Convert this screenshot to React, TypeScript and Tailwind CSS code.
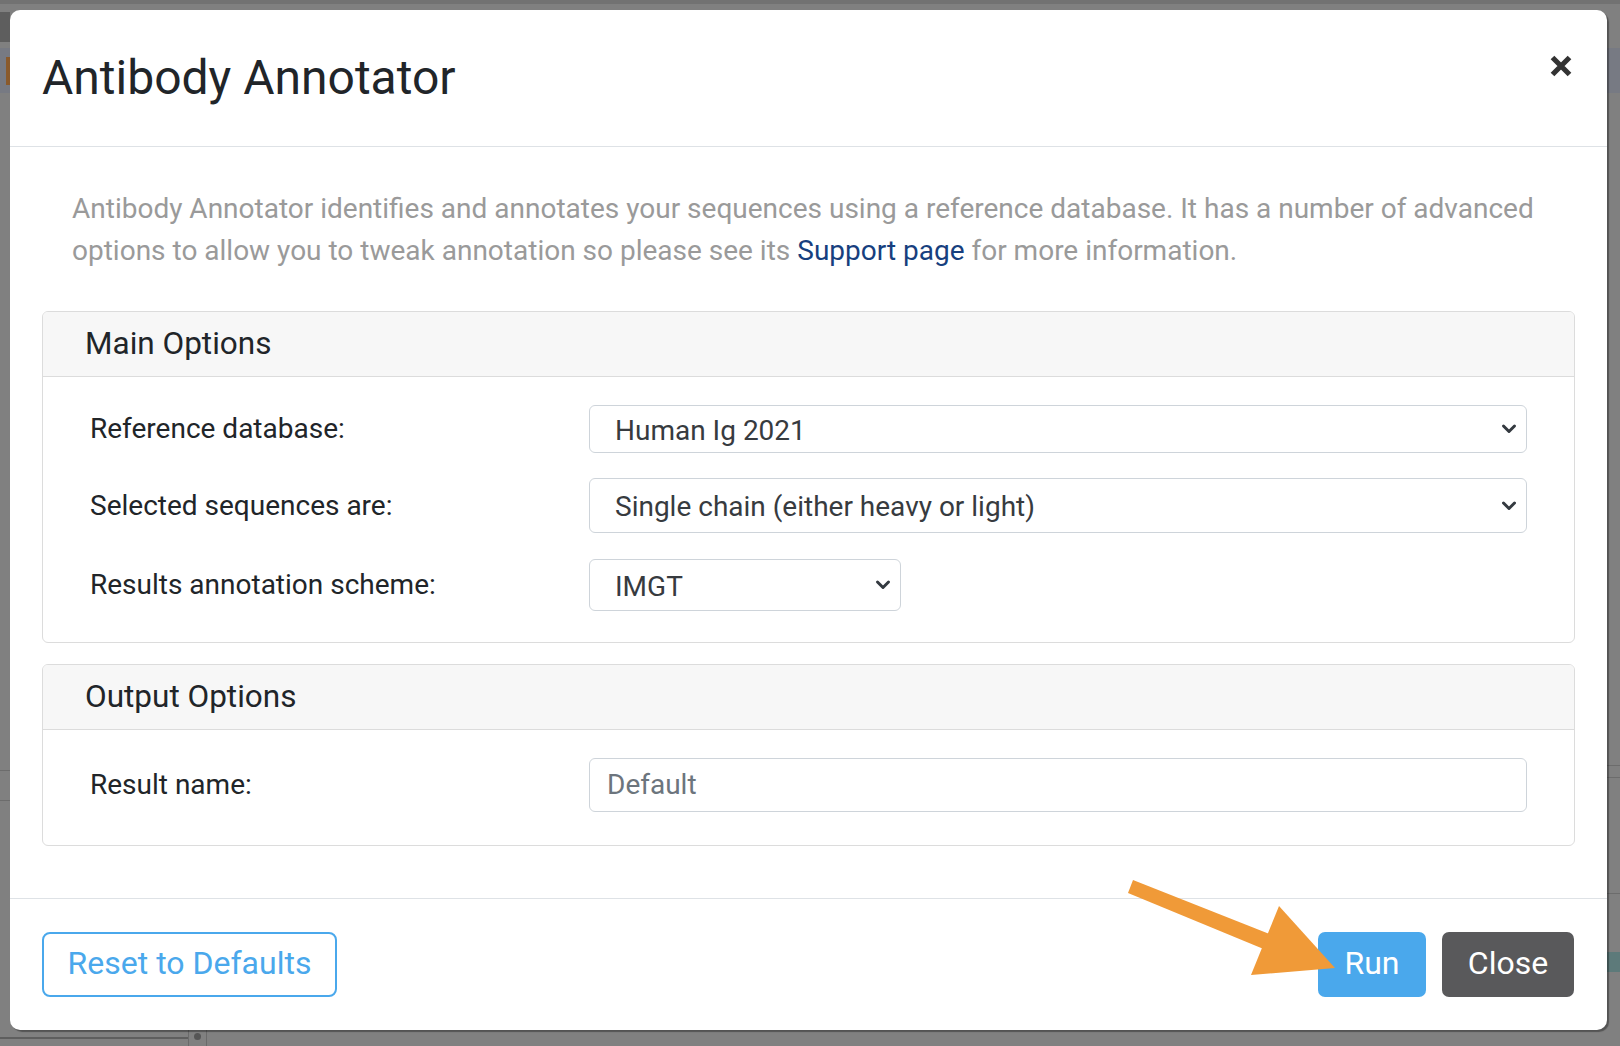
import React from "react";

function Chevron() {
  return (
    <svg width="16" height="12" viewBox="0 0 16 12" className="shrink-0">
      <path d="M2.5 3l5.5 5.5 5.5-5.5" fill="none" stroke="#343a40" strokeWidth="3" strokeLinecap="round" strokeLinejoin="round" />
    </svg>
  );
}

function SelectBox({ value, h, w }: { value: string; h: string; w: string }) {
  return (
    <div className={`${h} ${w} flex items-center justify-between border border-[#ced4da] rounded-[6px] bg-white pl-[25px] pr-[9px] text-[28px] text-[#373b3f]`}>
      <span className="pt-[3px]">{value}</span>
      <Chevron />
    </div>
  );
}

function Panel({ title, children, bodyClass }: { title: string; children: React.ReactNode; bodyClass: string }) {
  return (
    <div className="border border-[#dcdcdc] rounded-[6px] overflow-hidden">
      <div className="h-[65px] bg-[#f7f7f7] border-b border-[#dcdcdc] flex items-center pl-[42px] text-[31.5px] text-[#212529]">
        {title}
      </div>
      <div className={bodyClass}>{children}</div>
    </div>
  );
}

export default function App() {
  return (
    <div className="relative w-[1620px] h-[1046px] overflow-hidden bg-[#808080] [font-family:Roboto,'Noto_Sans',sans-serif]">
      {/* dimmed page behind the modal */}
      <div className="absolute inset-0">
        <div className="h-[4px] bg-[#727272]" />
        <div className="mt-[44px] h-[45px] bg-[#777a83]" />
        <div className="absolute left-0 top-[12px] w-[10px] h-[30px] bg-[#5e5e5e]" />
        <div className="absolute left-[6px] top-[57px] w-[4px] h-[28px] bg-[#8a5a2c]" />
        <div className="absolute left-0 top-[770px] w-[10px] h-[1px] bg-[#6c6c6c]" />
        <div className="absolute left-0 top-[800px] w-[10px] h-[1px] bg-[#6c6c6c]" />
        <div className="absolute right-0 top-[765px] w-[14px] h-[1px] bg-[#6c6c6c]" />
        <div className="absolute right-0 top-[777px] w-[14px] h-[1px] bg-[#6c6c6c]" />
        <div className="absolute right-0 top-[893px] w-[14px] h-[1px] bg-[#6c6c6c]" />
        <div className="absolute right-0 top-[952px] w-[14px] h-[20px] bg-[#5d7a7a]" />
        <div className="absolute left-0 top-[1037px] w-[188px] h-[2px] bg-[#5e5e5e]" />
        <div className="absolute left-[188px] top-[1030px] w-[1px] h-[16px] bg-[#6a6a6a]" />
        <div className="absolute left-[206px] top-[1030px] w-[1px] h-[16px] bg-[#6a6a6a]" />
        <div className="absolute left-[194px] top-[1033px] w-[7px] h-[7px] rounded-full bg-[#555]" />
      </div>

      {/* modal */}
      <div className="relative ml-[10px] mt-[10px] w-[1597px] h-[1020px] bg-white rounded-[10px] flex flex-col shadow-[2px_2px_1px_rgba(0,0,0,0.35)]">
        {/* header */}
        <div className="h-[137px] shrink-0 border-b border-[#dee2e6] flex justify-between items-center pl-[32px] pr-[34px]">
          <div className="text-[48px] leading-[1.2] text-[#212529]">Antibody Annotator</div>
          <div className="self-start mt-[44px]">
            <svg width="24" height="24" viewBox="0 0 24 24">
              <path d="M3.5 3.5L20.5 20.5M20.5 3.5L3.5 20.5" stroke="#333" strokeWidth="5.2" strokeLinecap="butt" />
            </svg>
          </div>
        </div>

        {/* body */}
        <div className="flex-1 px-[32px] pt-[41px]">
          <p className="pl-[30px] pr-[20px] text-[28px] leading-[42px] text-[#9a9a9a] mb-[39px]">
            Antibody Annotator identifies and annotates your sequences using a reference database. It has a number of advanced options to allow you to tweak annotation so please see its <span className="text-[#173f7e]">Support page</span> for more information.
          </p>

          <Panel title="Main Options" bodyClass="pl-[47px] pr-[47px] pt-[28px] pb-[31px] flex flex-col">
            <div className="flex items-center">
              <div className="w-[499px] text-[28px] text-[#212529]">Reference database:</div>
              <SelectBox value="Human Ig 2021" h="h-[48px]" w="flex-1" />
            </div>
            <div className="flex items-center mt-[25px]">
              <div className="w-[499px] text-[28px] text-[#212529]">Selected sequences are:</div>
              <SelectBox value="Single chain (either heavy or light)" h="h-[55px]" w="flex-1" />
            </div>
            <div className="flex items-center mt-[26px]">
              <div className="w-[499px] text-[28px] text-[#212529]">Results annotation scheme:</div>
              <SelectBox value="IMGT" h="h-[52px]" w="w-[312px]" />
            </div>
          </Panel>

          <div className="mt-[21px]">
            <Panel title="Output Options" bodyClass="pl-[47px] pr-[47px] pt-[28px] pb-[33px]">
              <div className="flex items-center">
                <div className="w-[499px] text-[28px] text-[#212529]">Result name:</div>
                <div className="flex-1 h-[54px] border border-[#ced4da] rounded-[6px] flex items-center pl-[17px] text-[28px] text-[#6c757d]">
                  Default
                </div>
              </div>
            </Panel>
          </div>
        </div>

        {/* footer */}
        <div className="h-[132px] shrink-0 border-t border-[#dee2e6] flex items-center justify-between pl-[32px] pr-[33px]">
          <button className="w-[295px] h-[65px] border-2 border-[#4aa8ec] rounded-[8px] text-[32px] text-[#4aa8ec] bg-white flex items-center justify-center pb-[3px]">
            Reset to Defaults
          </button>
          <div className="flex gap-[16px]">
            <button className="w-[108px] h-[65px] rounded-[7px] bg-[#4aa8ec] text-white text-[32px] flex items-center justify-center pb-[3px]">Run</button>
            <button className="w-[132px] h-[65px] rounded-[7px] bg-[#59595b] text-white text-[32px] flex items-center justify-center pb-[3px]">Close</button>
          </div>
        </div>
      </div>

      {/* orange annotation arrow */}
      <svg className="absolute left-0 top-0 pointer-events-none" width="1620" height="1046">
        <polygon points="1133,880 1272,935 1266,950 1128,893" fill="#f09a38" />
        <polygon points="1279,906 1251,975 1335,968" fill="#f09a38" />
      </svg>
    </div>
  );
}
